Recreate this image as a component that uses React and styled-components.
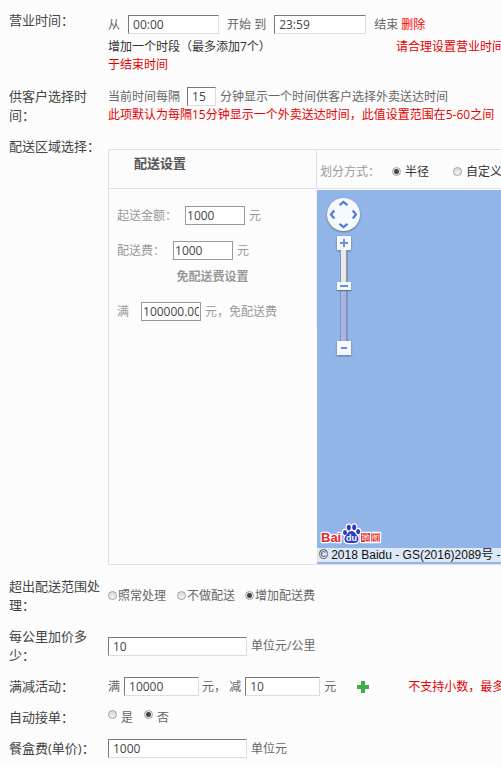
import styled, { createGlobalStyle, css } from "styled-components";

export default function App() {
  return (
    <>
      <GlobalStyle />
      <Form>
        <Row>
          <Label htmlFor="open-from">营业时间：</Label>
          <Content $top={10}>
            <Line>
              从
              <Field id="open-from" $width={91} $left={8} $right={8} defaultValue="00:00" />
              开始 到
              <Field aria-label="结束时间" $width={92} $left={8} $right={8} defaultValue="23:59" />
              结束 <DeleteLink href="#">删除</DeleteLink>
            </Line>
            <Notes>
              <AddLink href="#">增加一个时段（最多添加7个）</AddLink>
              <Warning>
                请合理设置营业时间
              </Warning>
              <br />
              <Warning>于结束时间</Warning>
            </Notes>
          </Content>
        </Row>

        <Row>
          <Label htmlFor="interval">供客户选择时间：</Label>
          <Content $top={6}>
            <Line>
              当前时间每隔
              <Field id="interval" $width={29} $left={7} $right={4} defaultValue="15" />
              分钟显示一个时间供客户选择外卖送达时间
            </Line>
            <Warning>此项默认为每隔15分钟显示一个外卖送达时间，此值设置范围在5-60之间</Warning>
          </Content>
        </Row>

        <Row>
          <Label as="div">配送区域选择：</Label>
          <DeliveryPanel />
        </Row>

        <Row>
          <Label as="div">超出配送范围处理：</Label>
          <Content $center>
            <Line>
              <Option name="range" label="照常处理" after={11} />
              <Option name="range" label="不做配送" after={10} />
              <Option name="range" label="增加配送费" checked />
            </Line>
          </Content>
        </Row>

        <Row>
          <Label htmlFor="per-km">每公里加价多少：</Label>
          <Content $center>
            <Line>
              <Field id="per-km" $width={139} $right={4} defaultValue="10" />
              单位元/公里
            </Line>
          </Content>
        </Row>

        <Row>
          <Label htmlFor="full">满减活动：</Label>
          <Content $center>
            <Line>
              满
              <Field id="full" $width={75} $left={4} $right={3} defaultValue="10000" />
              元， 减
              <Field aria-label="减" $width={75} $left={4} $right={4} defaultValue="10" />
              元
              <AddButton type="button" aria-label="添加">
                <svg width="12" height="12" viewBox="0 0 12 12">
                  <path d="M4 0h4v4h4v4H8v4H4V8H0V4h4z" fill="#3fae49" />
                </svg>
              </AddButton>
              <Warning>不支持小数，最多</Warning>
            </Line>
          </Content>
        </Row>

        <Row>
          <Label as="div">自动接单：</Label>
          <Content $center>
            <Line>
              <Option name="auto" label="是" gap={4} after={11} raised />
              <Option name="auto" label="否" gap={4} raised checked />
            </Line>
          </Content>
        </Row>

        <Row>
          <Label htmlFor="box-fee">餐盒费(单价)：</Label>
          <Content $center>
            <Line>
              <Field id="box-fee" $width={139} $right={4} defaultValue="1000" />
              单位元
            </Line>
          </Content>
        </Row>
      </Form>
    </>
  );
}

function Option({ name, label, checked, gap = 1, after = 0, raised }) {
  return (
    <OptionLabel $gap={gap} $after={after}>
      <Radio type="radio" name={name} defaultChecked={checked} $raised={raised} />
      {label}
    </OptionLabel>
  );
}

function DeliveryPanel() {
  return (
    <Panel>
      <PanelHead>
        <PanelTitle>配送设置</PanelTitle>
        <DivideBy>
          <Muted>划分方式：</Muted>
          <Option name="divide" label="半径" gap={4} after={24} checked />
          <Option name="divide" label="自定义" gap={4} />
        </DivideBy>
      </PanelHead>
      <PanelBody>
        <Fees>
          <FeeRow>
            <label htmlFor="min-order">起送金额：</label>
            <FeeField id="min-order" $left={8} defaultValue="1000" />
            元
          </FeeRow>
          <FeeRow>
            <label htmlFor="fee">配送费：</label>
            <FeeField id="fee" $left={8} defaultValue="1000" />
            元
          </FeeRow>
          <FreeTitle>免配送费设置</FreeTitle>
          <FeeRow>
            <label htmlFor="free">满</label>
            <FeeField id="free" $left={12} defaultValue="100000.00" />
            元，免配送费
          </FeeRow>
        </Fees>
        <Map>
          <MapControls>
            <PanWheel>
              <PanButton $area="up" aria-label="向上"><Chevron turn={0} /></PanButton>
              <PanButton $area="left" aria-label="向左"><Chevron turn={-90} /></PanButton>
              <PanButton $area="right" aria-label="向右"><Chevron turn={90} /></PanButton>
              <PanButton $area="down" aria-label="向下"><Chevron turn={180} /></PanButton>
            </PanWheel>
            <ZoomButton aria-label="放大">
              <svg width="8" height="8" viewBox="0 0 8 8">
                <path d="M3 0h2v3h3v2H5v3H3V5H0V3h3z" fill="#6d8ce4" />
              </svg>
            </ZoomButton>
            <ZoomRange type="range" aria-label="缩放" defaultValue="62" />
            <ZoomButton aria-label="缩小">
              <svg width="8" height="8" viewBox="0 0 8 8">
                <path d="M1 3h6v2H1z" fill="#6d8ce4" />
              </svg>
            </ZoomButton>
          </MapControls>
          <BaiduLogo />
          <Copyright>© 2018 Baidu - GS(2016)2089号 -</Copyright>
        </Map>
      </PanelBody>
    </Panel>
  );
}

function Chevron({ turn }) {
  return (
    <svg width="11" height="11" viewBox="0 0 11 11">
      <path
        d="M1.5 7.2L5.5 4l4 3.2"
        transform={`rotate(${turn} 5.5 5.5)`}
        fill="none"
        stroke="#4f7bd8"
        strokeWidth="2.2"
      />
    </svg>
  );
}

function Paw() {
  return (
    <>
      <ellipse cx="25" cy="10.5" rx="2" ry="2.6" />
      <ellipse cx="28.8" cy="5.6" rx="2" ry="2.8" />
      <ellipse cx="34.2" cy="5.2" rx="2" ry="2.8" />
      <ellipse cx="38.2" cy="9.6" rx="2" ry="2.6" />
      <path d="M31.5 9c3 0 4 3 6 5 2 3 1 7-3 7h-6c-4 0-5-4-3-7 2-2 3-5 6-5z" />
    </>
  );
}

function BaiduLogo() {
  return (
    <Logo width="64" height="24" viewBox="0 0 64 24">
      <g stroke="#fff" strokeWidth="2.5" fill="#fff" strokeLinejoin="round">
        <text x="1" y="20" fontSize="13" fontWeight="bold">Bai</text>
        <path d="M41 11h19v9H41z" />
        <Paw />
      </g>
      <text x="1" y="20" fontSize="13" fontWeight="bold" fill="#e4282c">Bai</text>
      <g fill="#2d39c8">
        <Paw />
      </g>
      <text x="26" y="19" fontSize="9" fontWeight="bold" fill="#fff">du</text>
      <path d="M41 11h9v9h-9zM51 11h9v9h-9z" fill="#e4282c" />
      <text x="41" y="19" fontSize="9" fill="#fff">地</text>
      <text x="51" y="19" fontSize="9" fill="#fff">图</text>
    </Logo>
  );
}

const GlobalStyle = createGlobalStyle`
  * {
    box-sizing: border-box;
  }

  body {
    margin: 0;
    overflow-x: hidden;
    background: #fcfcfc;
    color: #666;
    font: 12px/18px "Open Sans", "Noto Sans CJK SC", sans-serif;
  }

  button, input {
    margin: 0;
    font: inherit;
  }
`;

const Form = styled.form`
  padding: 5px 0 0 9px;
  overflow: hidden;
`;

const Row = styled.div`
  display: grid;
  grid-template-columns: 95px minmax(0, 1fr);
  column-gap: 4px;
`;

const Label = styled.label`
  padding: 6px 0;
  color: #444;
  font-size: 13px;
  line-height: 19px;
`;

const Content = styled.div`
  padding: ${({ $top = 0 }) => $top}px 0 7px;
  white-space: nowrap;
  ${({ $center }) =>
    $center &&
    css`
      padding: 0;
      align-self: center;
    `}
`;

const Line = styled.div`
  display: flex;
  align-items: center;
  height: 19px;
  white-space: pre;
`;

const Notes = styled.div`
  padding-top: 4px;
`;

const Field = styled.input`
  flex: none;
  width: ${({ $width }) => $width}px;
  height: 19px;
  margin: 0 ${({ $right = 0 }) => $right}px 0 ${({ $left = 0 }) => $left}px;
  padding: 0 4px;
  border: 1px solid;
  border-color: #777 #ddd #ddd #777;
  background: #fff;
  color: #444;
`;

const Warning = styled.span`
  color: #e60000;
`;

const DeleteLink = styled.a`
  color: #f00;
  text-decoration: none;
`;

const AddLink = styled.a`
  margin-right: 125px;
  color: #333;
  text-decoration: none;
`;

const AddButton = styled.button`
  display: flex;
  margin: 0 39px 0 21px;
  padding: 0;
  border: 0;
  background: none;
`;

const OptionLabel = styled.label`
  display: flex;
  align-items: center;
  gap: ${({ $gap }) => $gap}px;
  margin-right: ${({ $after }) => $after}px;
`;

const Radio = styled.input`
  appearance: none;
  width: 9px;
  height: 9px;
  margin-bottom: ${({ $raised }) => ($raised ? 7 : 2)}px;
  border: 1px solid #a0a0a0;
  border-radius: 50%;
  background: linear-gradient(#d8d8d8, #f4f4f4);

  &:checked {
    background: radial-gradient(circle, #444 0 2px, #e8e8e8 3px);
  }
`;

const Panel = styled.div`
  margin: 18px 0 6px;
  border: solid #dfe1e4;
  border-width: 1px 0 1px 1px;
`;

const PanelHead = styled.div`
  display: flex;
  height: 39px;
  border-bottom: 1px solid #dfe1e4;
`;

const PanelTitle = styled.div`
  flex: none;
  width: 208px;
  padding: 4px 25px;
  border-right: 1px solid #dfe1e4;
  color: #555;
  font-size: 13px;
  font-weight: bold;
  line-height: 19px;
`;

const DivideBy = styled.div`
  display: flex;
  align-items: center;
  padding: 6px 0 0 3px;
  color: #333;
  white-space: nowrap;
`;

const Muted = styled.span`
  margin-right: 12px;
  color: #999;
`;

const PanelBody = styled.div`
  display: flex;
  align-items: flex-start;
`;

const Fees = styled.div`
  flex: none;
  width: 208px;
  padding: 9px 8px 0;
  border-right: 1px solid #eceef0;
  color: #999;
`;

const FeeRow = styled.div`
  display: flex;
  align-items: center;
  height: 35px;
`;

const FeeField = styled.input`
  width: 60px;
  height: 19px;
  margin: 0 4px 0 ${({ $left }) => $left}px;
  padding: 0 1px;
  border: 1px solid #999;
  background: #fff;
  color: #444;
`;

const FreeTitle = styled.div`
  margin-bottom: 8px;
  color: #999;
  font-weight: bold;
  text-align: center;
`;

const Map = styled.div`
  position: relative;
  flex: 1;
  min-width: 0;
  height: 374px;
  margin-top: 1px;
  background: #91b5e7;
  overflow: hidden;
`;

const MapControls = styled.div`
  position: absolute;
  top: 8px;
  left: 10px;
  display: flex;
  flex-direction: column;
  align-items: center;
`;

const PanWheel = styled.div`
  display: grid;
  grid-template: ". up ." 11px "left . right" 11px ". down ." 11px / 11px 11px 11px;
  margin-bottom: 5px;
  border-radius: 50%;
  background: #f7f8fa;
  box-shadow: 0 1px 2px #5f7088;
`;

const PanButton = styled.button.attrs({ type: "button" })`
  grid-area: ${({ $area }) => $area};
  display: flex;
  padding: 0;
  border: 0;
  background: none;
`;

const ZoomButton = styled.button.attrs({ type: "button" })`
  display: flex;
  align-items: center;
  justify-content: center;
  width: 14px;
  height: 14px;
  padding: 0;
  border: 0;
  background: #f7f8fb;
  box-shadow: 0 1px 2px #5f7088;
`;

const ZoomRange = styled.input`
  appearance: none;
  writing-mode: vertical-lr;
  direction: rtl;
  width: 14px;
  height: 91px;
  background: none;

  &::-webkit-slider-runnable-track {
    width: 8px;
    height: 91px;
    border: solid #8795ab;
    border-width: 0 2px 0 1px;
    background: linear-gradient(#e9e9ec 36%, #a5b4ec 36%);
  }

  &::-webkit-slider-thumb {
    appearance: none;
    width: 14px;
    height: 8px;
    margin-left: -4px;
    background: linear-gradient(#6d8ce4, #6d8ce4) center / 8px 2px no-repeat #f7f8fb;
    box-shadow: 0 1px 1px #5f7088;
  }
`;

const Logo = styled.svg`
  position: absolute;
  bottom: 18px;
  left: 3px;
  font-family: "Liberation Sans", "Noto Sans CJK SC", sans-serif;
`;

const Copyright = styled.div`
  position: absolute;
  right: 0;
  bottom: 2px;
  left: 0;
  padding-left: 2px;
  background: rgba(255, 255, 255, 0.7);
  color: #111;
  font: 12px/14px "Liberation Sans", "Noto Sans CJK SC", sans-serif;
  white-space: nowrap;
`;
